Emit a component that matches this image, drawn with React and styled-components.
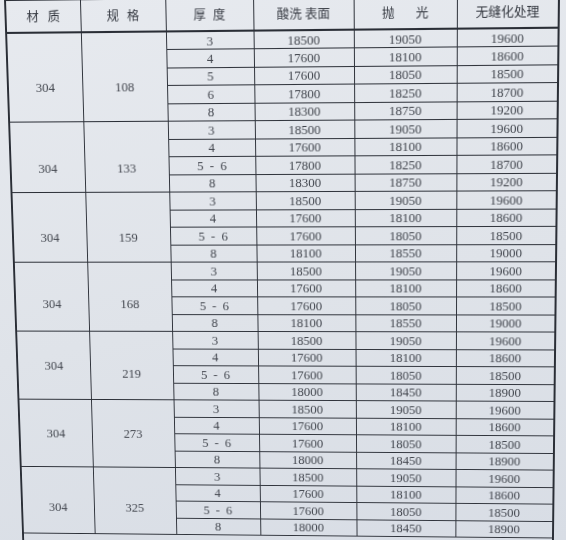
import React from "react";
import styled, { createGlobalStyle } from "styled-components";

// the photo is shot at an angle, so the flat table is mapped onto the four corners seen in it
const COLS = [76, 86, 88, 100, 102, 100];
const HEAD_H = 32;
const ROW_H = 17.5;
const SHEET_W = COLS.reduce((a, b) => a + b, 0);
const SHEET_H = HEAD_H + ROW_H * 29;

const CORNERS = [
  [4, -1],
  [558, -7],
  [22, 532],
  [552, 537],
];

function solve(A, b) {
  const n = b.length;
  const m = A.map((row, i) => [...row, b[i]]);
  for (let c = 0; c < n; c++) {
    let p = c;
    for (let r = c + 1; r < n; r++) if (Math.abs(m[r][c]) > Math.abs(m[p][c])) p = r;
    [m[c], m[p]] = [m[p], m[c]];
    for (let r = 0; r < n; r++) {
      if (r === c) continue;
      const f = m[r][c] / m[c][c];
      for (let k = c; k <= n; k++) m[r][k] -= f * m[c][k];
    }
  }
  return m.map((row, i) => row[n] / row[i]);
}

function perspective(src, dst) {
  const A = [];
  const b = [];
  src.forEach(([x, y], i) => {
    const [u, v] = dst[i];
    A.push([x, y, 1, 0, 0, 0, -u * x, -u * y]);
    b.push(u);
    A.push([0, 0, 0, x, y, 1, -v * x, -v * y]);
    b.push(v);
  });
  const h = solve(A, b);
  return `matrix3d(${h[0]},${h[3]},0,${h[6]},${h[1]},${h[4]},0,${h[7]},0,0,1,0,${h[2]},${h[5]},0,1)`;
}

const TRANSFORM = perspective(
  [
    [0, 0],
    [SHEET_W, 0],
    [0, SHEET_H],
    [SHEET_W, SHEET_H],
  ],
  CORNERS
);

const LOW = [
  ["3", "18500", "19050", "19600"],
  ["4", "17600", "18100", "18600"],
  ["5 - 6", "17600", "18050", "18500"],
  ["8", "18000", "18450", "18900"],
];

const MID = [
  ["3", "18500", "19050", "19600"],
  ["4", "17600", "18100", "18600"],
  ["5 - 6", "17600", "18050", "18500"],
  ["8", "18100", "18550", "19000"],
];

// the merged labels were not printed dead centre, so each keeps its own drop
const GROUPS = [
  {
    size: "108",
    drop: [18, 18],
    rows: [
      ["3", "18500", "19050", "19600"],
      ["4", "17600", "18100", "18600"],
      ["5", "17600", "18050", "18500"],
      ["6", "17800", "18250", "18700"],
      ["8", "18300", "18750", "19200"],
    ],
  },
  {
    size: "133",
    drop: [22, 22],
    rows: [
      ["3", "18500", "19050", "19600"],
      ["4", "17600", "18100", "18600"],
      ["5 - 6", "17800", "18250", "18700"],
      ["8", "18300", "18750", "19200"],
    ],
  },
  { size: "159", drop: [20, 20], rows: MID },
  { size: "168", drop: [14, 14], rows: MID },
  { size: "219", drop: [0, 16], rows: LOW },
  { size: "273", drop: [0, 0], rows: LOW },
  { size: "325", drop: [14, 14], rows: LOW },
];

const HEADS = [
  { label: "材 质", spacing: 6 },
  { label: "规 格", spacing: 5 },
  { label: "厚 度", spacing: 4 },
  { label: "酸洗 表面", spacing: 0 },
  { label: "抛 光", spacing: 18 },
  { label: "无缝化处理", spacing: 0 },
];

const GlobalStyle = createGlobalStyle`
  html, body {
    margin: 0;
    padding: 0;
  }
  body {
    width: 566px;
    height: 540px;
    overflow: hidden;
    background: linear-gradient(168deg, #e7eaef 0%, #dfe3e9 55%, #d8dde5 100%);
  }
`;

function App() {
  return (
    <>
      <GlobalStyle />
      <Frame>
        <Sheet $transform={TRANSFORM}>
          <Table>
            <colgroup>
              {COLS.map((w, i) => (
                <col key={i} style={{ width: w }} />
              ))}
            </colgroup>
            <thead>
              <HeadRow>
                {HEADS.map((h) => (
                  <HeadCell key={h.label} $spacing={h.spacing}>
                    {h.label}
                  </HeadCell>
                ))}
              </HeadRow>
            </thead>
            <tbody>
              {GROUPS.map((g) =>
                g.rows.map((r, i) => (
                  <Row key={g.size + i}>
                    {i === 0 && (
                      <>
                        <MergedCell rowSpan={g.rows.length} $drop={g.drop[0]}>
                          304
                        </MergedCell>
                        <MergedCell rowSpan={g.rows.length} $drop={g.drop[1]}>
                          {g.size}
                        </MergedCell>
                      </>
                    )}
                    <Cell $spread>{r[0]}</Cell>
                    <Cell>{r[1]}</Cell>
                    <Cell>{r[2]}</Cell>
                    <Cell>{r[3]}</Cell>
                  </Row>
                ))
              )}
              <NoteRow>
                <Cell colSpan={6} />
              </NoteRow>
            </tbody>
          </Table>
        </Sheet>
      </Frame>
    </>
  );
}

export default App;

const Frame = styled.div`
  width: 566px;
  height: 540px;
  overflow: hidden;
`;

const Sheet = styled.div`
  width: ${SHEET_W}px;
  transform-origin: 0 0;
  transform: ${(p) => p.$transform};
  filter: blur(0.25px);
`;

const Table = styled.table`
  width: ${SHEET_W}px;
  table-layout: fixed;
  border-collapse: collapse;
  border: 2px solid #2a2e36;
  font-family: "Liberation Serif", "Noto Sans CJK SC", serif;
  color: #42464e;
`;

const HeadRow = styled.tr`
  height: ${HEAD_H}px;
`;

const HeadCell = styled.th`
  border: 1px solid #2f333b;
  border-bottom: 2px solid #2a2e36;
  padding: 0;
  font-family: "Noto Sans CJK SC", "Liberation Serif", sans-serif;
  font-size: 12.5px;
  font-weight: 400;
  word-spacing: ${(p) => p.$spacing}px;
  text-align: center;
  vertical-align: middle;
  line-height: 1;
  color: #353941;
`;

const Row = styled.tr`
  height: ${ROW_H}px;
`;

const Cell = styled.td`
  border: 1px solid #30343c;
  padding: 0;
  font-size: 13px;
  line-height: 1;
  text-align: center;
  vertical-align: middle;
  word-spacing: ${(p) => (p.$spread ? "3px" : "0")};
  white-space: nowrap;
`;

const MergedCell = styled(Cell)`
  border-bottom: 1.5px solid #2a2e36;
  padding-top: ${(p) => p.$drop}px;
`;

const NoteRow = styled.tr`
  height: 12px;
`;
